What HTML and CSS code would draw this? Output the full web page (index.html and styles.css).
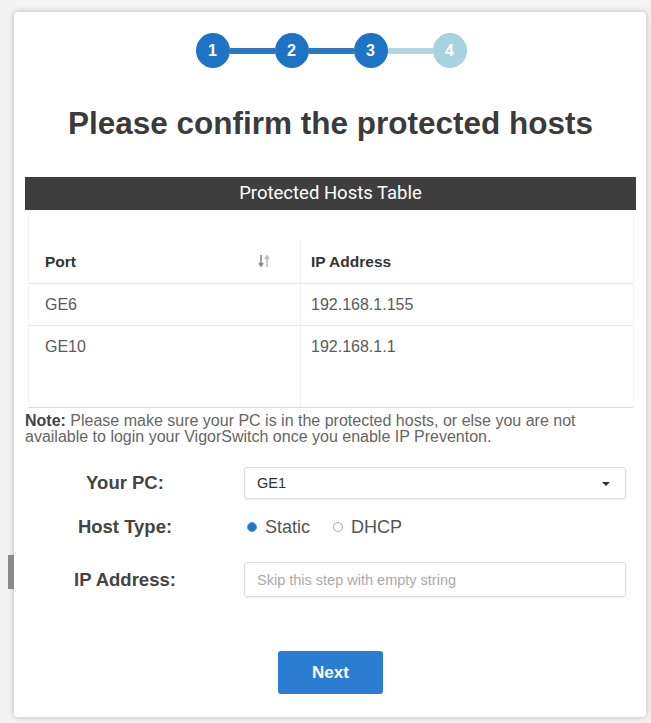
FILE: index.html
```html
<!DOCTYPE html>
<html>
<head>
<meta charset="utf-8">
<link rel="stylesheet" href="styles.css">
</head>
<body>
<div class="backdrop">
  <div class="edge-mark"></div>
  <div class="modal">
    <div class="steps">
      <div class="step done">1</div>
      <div class="link done"></div>
      <div class="step done">2</div>
      <div class="link done"></div>
      <div class="step done">3</div>
      <div class="link todo"></div>
      <div class="step todo">4</div>
    </div>
    <h1 class="title">Please confirm the protected hosts</h1>
    <div class="bar">Protected Hosts Table</div>
    <div class="table-wrap">
      <div class="row head">
        <div class="cell c1">Port
          <svg class="sort" width="12" height="14" viewBox="0 0 12 14">
            <path d="M3 1v10M1 9l2 3 2-3" stroke="#888" stroke-width="1.6" fill="none"/>
            <path d="M9 13V3M7 5l2-3 2 3" stroke="#bbb" stroke-width="1.6" fill="none"/>
          </svg>
        </div>
        <div class="cell c2">IP Address</div>
      </div>
      <div class="row">
        <div class="cell c1">GE6</div>
        <div class="cell c2">192.168.1.155</div>
      </div>
      <div class="row last">
        <div class="cell c1">GE10</div>
        <div class="cell c2">192.168.1.1</div>
      </div>
      <div class="filler"><div class="cell c1"></div><div class="cell c2"></div></div>
    </div>
    <p class="note"><b>Note:</b> Please make sure your PC is in the protected hosts, or else you are not<br>available to login your VigorSwitch once you enable IP Preventon.</p>
    <div class="form">
      <div class="frow">
        <div class="label">Your PC:</div>
        <div class="select">GE1<span class="caret"></span></div>
      </div>
      <div class="frow radio-row">
        <div class="label">Host Type:</div>
        <div class="radios">
          <span class="radio on"></span><span class="rlabel">Static</span>
          <span class="radio"></span><span class="rlabel">DHCP</span>
        </div>
      </div>
      <div class="frow">
        <div class="label">IP Address:</div>
        <div class="input">Skip this step with empty string</div>
      </div>
    </div>
    <div class="actions"><button class="next">Next</button></div>
  </div>
</div>
</body>
</html>
```
FILE: styles.css
```css
html, body { margin: 0; padding: 0; }
body {
  width: 651px; height: 723px; overflow: hidden;
  background: #f4f4f4;
  font-family: "Liberation Sans", Arial, sans-serif;
}
.backdrop { position: relative; padding: 12px 5px 0 14px; }
.edge-mark {
  position: absolute; left: 8px; top: 555px; width: 6px; height: 34px; background: #8a8a8a;
}
.modal {
  width: 632px; height: 705px; box-sizing: border-box;
  background: #fff; border-radius: 4px;
  box-shadow: 0 0 6px rgba(0,0,0,0.25);
  padding: 21px 10px 0 11px;
}
.steps { display: flex; align-items: center; justify-content: center; padding-left: 1px; }
.step {
  width: 34px; height: 35px; border-radius: 50%;
  display: flex; align-items: center; justify-content: center;
  color: #fff; font-weight: bold; font-size: 16px;
}
.step.done { background: #1e73c5; }
.step.todo { background: #a7d2df; }
.link { width: 45px; height: 6px; }
.link.done { background: #2a78c4; }
.link.todo { background: #b2d6e0; }
.title {
  margin: 37px 0 0; text-align: center;
  font-size: 31.5px; font-weight: bold; color: #3b3b3b; line-height: 36px;
}
.bar {
  margin-top: 36px; height: 33px; background: #3e3e3e; color: #fff;
  text-align: center; line-height: 33px; font-size: 18.5px;
  font-family: "Roboto", "Liberation Sans", sans-serif;
}
.table-wrap {
  margin: 0 2px 0 3px; padding: 30px 0 0 0;
  border-left: 1px solid #f4f4f4; border-right: 1px solid #f4f4f4;
}
.row { display: flex; height: 41px; border-bottom: 1px solid #e8e8e8; }
.row.last { border-bottom: none; }
.row.head { height: 43px; }
.cell { display: flex; align-items: center; font-size: 16px; color: #5a5a5a; }
.c1 { width: 255px; padding-left: 16px; position: relative; }
.c2 { flex: 1; padding-left: 10px; border-left: 1px solid #f2f2f2; }
.head .cell { font-weight: bold; color: #333; font-size: 15.5px; }
.sort { position: absolute; right: 30px; top: 14px; }
.filler { display: flex; height: 40px; border-bottom: 1px solid #dcdcdc; }
.note {
  margin: 5px 0 0 0; font-size: 16px; line-height: 16px; color: #666;
}
.note b { color: #444; }
.form { margin-top: 22px; display: flex; flex-direction: column; }
.frow { display: flex; align-items: center; }
.radio-row { margin: 12px 0 19px; }
.label { width: 200px; text-align: center; font-weight: bold; font-size: 18.5px; color: #444; padding-right: 8px; }
.select, .input {
  margin-left: 11px; width: 382px; box-sizing: border-box; border: 1px solid #ddd; border-radius: 3px;
  box-shadow: 0 1px 2px rgba(0,0,0,0.08);
  display: flex; align-items: center; padding-left: 12px; position: relative;
}
.select { height: 32px; font-size: 14.5px; color: #333; }
.caret {
  position: absolute; right: 15px; top: 14px;
  border-left: 4px solid transparent; border-right: 4px solid transparent; border-top: 4px solid #333;
}
.radios { margin-left: 11px; display: flex; align-items: center; height: 32px; padding-left: 3px; }
.radio {
  width: 8px; height: 8px; border-radius: 50%; border: 1px solid #aaa; margin-right: 8px;
}
.radio.on { background: #1e73d0; border-color: #5a9be0; }
.rlabel { font-size: 18px; color: #555; margin-right: 23px; }
.input { height: 35px; font-size: 14.5px; color: #aaa; }
.actions { display: flex; justify-content: center; margin-top: 54px; }
.next {
  width: 105px; height: 43px; border: none; border-radius: 3px;
  background: #2b7dd2; color: #fff; font-size: 17px; font-weight: bold;
  font-family: "Liberation Sans", Arial, sans-serif;
}
```
